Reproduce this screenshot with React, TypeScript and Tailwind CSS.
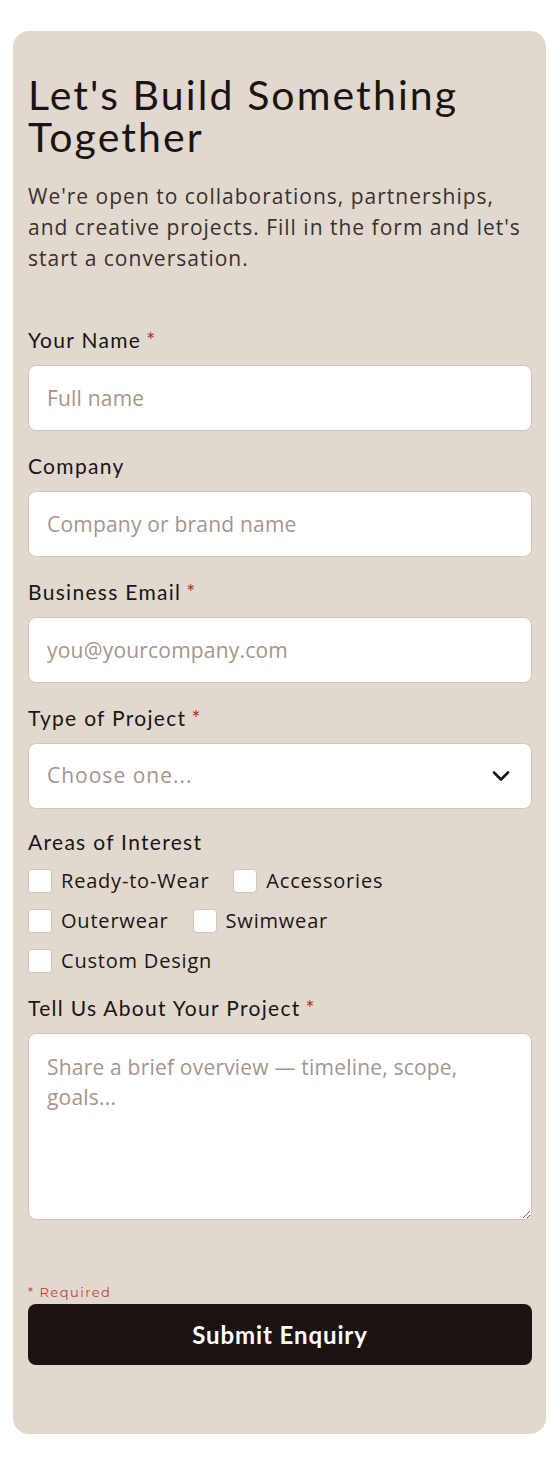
import React from "react";

const head = "font-['Lato','Liberation_Sans',sans-serif]";
const body = "font-['Open_Sans','Liberation_Sans',sans-serif]";

function Label({ text, req }: { text: string; req?: boolean }) {
  return (
    <div className={`${head} text-[21px] leading-[26px] tracking-[1.3px] text-[#1b1513] mb-[12px]`}>
      {text}
      {req && <span className="text-[#c42a21] ml-[5px]">*</span>}
    </div>
  );
}

function Input({ placeholder }: { placeholder: string }) {
  return (
    <input
      placeholder={placeholder}
      className={`${body} block w-full h-[66px] rounded-[8px] border border-[#d3c5bb] bg-white px-[18px] text-[21px] tracking-[0.2px] text-[#1b1513] placeholder:text-[#a6958d] outline-none`}
    />
  );
}

function Check({ label }: { label: string }) {
  return (
    <label className="flex items-center gap-[9px]">
      <span className="w-[24px] h-[24px] rounded-[4px] border border-[#d3c5bb] bg-white shrink-0" />
      <span className={`${body} text-[20px] leading-[27px] font-medium tracking-[0.8px] text-[#1b1513]`}>{label}</span>
    </label>
  );
}

export default function App() {
  return (
    <div className="bg-white min-h-[1466px] pt-[31px] pl-[13px] pr-[12px]">
      <div className="bg-[#e1d9cf] rounded-[16px] pl-[15px] pr-[14px] pt-[43px] pb-[69px]">
        <h1 className={`${head} text-[41px] leading-[42px] tracking-[2.1px] text-[#1a1412] font-normal`}>
          Let's Build Something Together
        </h1>
        <p className={`${body} mt-[23px] text-[21px] leading-[31px] tracking-[1px] text-[#3a302c]`}>
          We're open to collaborations, partnerships, and creative projects. Fill in the form and let's start a conversation.
        </p>

        <div className="mt-[53px]">
          <Label text="Your Name" req />
          <Input placeholder="Full name" />
        </div>
        <div className="mt-[22px]">
          <Label text="Company" />
          <Input placeholder="Company or brand name" />
        </div>
        <div className="mt-[22px]">
          <Label text="Business Email" req />
          <Input placeholder="you@yourcompany.com" />
        </div>
        <div className="mt-[22px]">
          <Label text="Type of Project" req />
          <div className="relative h-[66px] rounded-[8px] border border-[#d3c5bb] bg-white flex items-center px-[18px]">
            <span className={`${body} text-[21px] tracking-[1px] text-[#a6958d] flex-1`}>Choose one...</span>
            <svg width="18" height="12" viewBox="0 0 18 12" className="mr-[3px]">
              <path d="M2 2.5 L9 9.5 L16 2.5" fill="none" stroke="#1b1513" strokeWidth="2.6" strokeLinecap="round" strokeLinejoin="round" />
            </svg>
          </div>
        </div>
        <div className="mt-[20px]">
          <Label text="Areas of Interest" />
          <div className="flex flex-wrap gap-x-[24px] gap-y-[13px] max-w-[400px]">
            <Check label="Ready-to-Wear" />
            <Check label="Accessories" />
            <Check label="Outerwear" />
            <Check label="Swimwear" />
            <Check label="Custom Design" />
          </div>
        </div>
        <div className="mt-[21px]">
          <Label text="Tell Us About Your Project" req />
          <textarea
            placeholder="Share a brief overview — timeline, scope, goals..."
            className={`${body} block w-full h-[187px] rounded-[8px] border border-[#d3c5bb] bg-white px-[18px] pt-[18px] pb-[16px] text-[21px] tracking-[0.2px] leading-[30px] text-[#1b1513] placeholder:text-[#a6958d] outline-none resize-y`}
          />
        </div>

        <div className="mt-[63px] font-['Montserrat','Liberation_Sans',sans-serif] text-[13px] leading-[18px] tracking-[1.5px] text-[#c43a32]">
          * Required
        </div>
        <button className={`${head} mt-[3px] w-full h-[61px] rounded-[8px] bg-[#1c1311] text-white text-[24px] font-bold tracking-[0.9px]`}>
          Submit Enquiry
        </button>
      </div>
    </div>
  );
}
